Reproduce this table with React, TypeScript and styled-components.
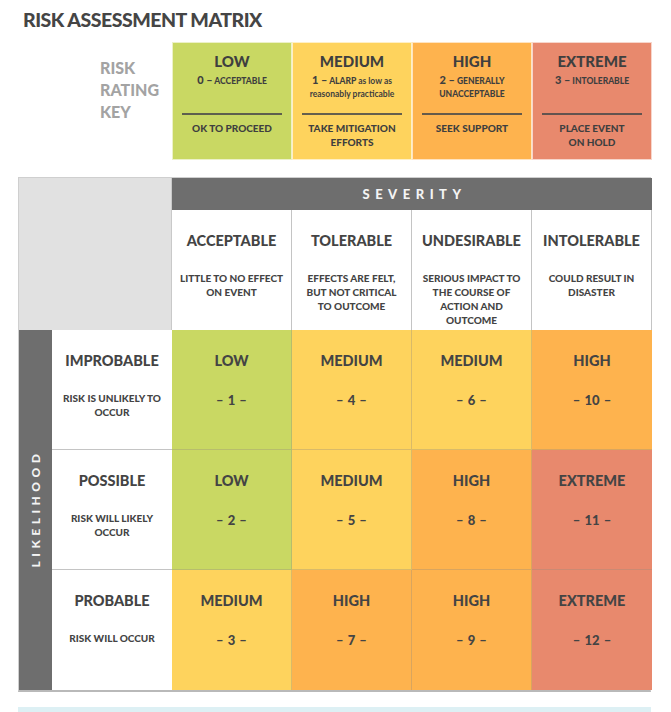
import React from "react";
import styled, { createGlobalStyle } from "styled-components";

const Global = createGlobalStyle`
  html, body { margin: 0; padding: 0; background: #ffffff; }
  body { font-family: "Lato", "Noto Sans", sans-serif; color: #3f3f3f; }
`;

const C = {
  low: "#c9d863",
  medium: "#fed35d",
  high: "#feb34e",
  extreme: "#e8896d",
};

type Level = keyof typeof C;

const Page = styled.div`
  width: 671px;
  height: 712px;
  overflow: hidden;
  padding: 9px 0 0 0;
  box-sizing: border-box;
`;

const Title = styled.h1`
  margin: 0 0 0 23px;
  font-size: 19.5px;
  line-height: 22px;
  font-weight: 900;
  color: #454545;
  letter-spacing: -0.5px;
`;

const KeyRow = styled.div`
  display: grid;
  grid-template-columns: 172px repeat(4, 120px);
  margin-top: 11px;
  height: 118px;
`;

const KeyLabel = styled.div`
  padding: 15px 0 0 100px;
  font-size: 16px;
  line-height: 22px;
  font-weight: 900;
  color: #a3a3a3;
`;

const KeyBox = styled.div<{ $level: Level }>`
  background: ${(p) => C[p.$level]};
  border: 1px solid rgba(255, 255, 255, 0.65);
  display: flex;
  flex-direction: column;
  align-items: center;
  text-align: center;
  padding: 0 9px;
  box-sizing: border-box;
`;

const KeyTop = styled.div`
  height: 70px;
  padding-top: 10px;
  box-sizing: border-box;
  width: 100%;
`;

const KeyHead = styled.div`
  font-size: 15px;
  line-height: 17px;
  font-weight: 900;
  color: #3f3f3f;
`;

const KeySub = styled.div`
  margin-top: 3px;
  font-size: 8.5px;
  line-height: 13px;
  font-weight: 900;
  color: #3f3f3f;
`;

const KeyNum = styled.span`
  font-size: 11px;
  line-height: 13px;
`;

const Lower = styled.span`
  text-transform: none;
  font-weight: 700;
`;

const Rule = styled.div`
  width: 100%;
  height: 2px;
  background: #4a4a4a;
  opacity: 0.85;
`;

const KeyAction = styled.div`
  margin-top: 6px;
  font-size: 10px;
  line-height: 14px;
  font-weight: 900;
  color: #3f3f3f;
`;

const Matrix = styled.div`
  margin: 17px 0 0 18px;
  width: 633px;
  display: grid;
  grid-template-columns: 33px 120px repeat(4, 120px);
  grid-template-rows: 32px repeat(4, 120px);
  border: 1px solid #cfcfcf;
  border-bottom: 2px solid #b9b9b9;
  box-sizing: border-box;
`;

const Corner = styled.div`
  grid-column: 1 / 3;
  grid-row: 1 / 3;
  background: #e1e1e1;
  border-right: 1px solid #c9c9c9;
`;

const SeverityBar = styled.div`
  grid-column: 3 / 7;
  grid-row: 1;
  background: #6e6e6e;
  color: #f4f4f4;
  display: flex;
  align-items: center;
  justify-content: center;
  font-size: 13px;
  font-weight: 900;
  letter-spacing: 5.5px;
  padding-left: 5px;
`;

const LikelihoodBar = styled.div`
  grid-column: 1;
  grid-row: 3 / 6;
  background: #6e6e6e;
  display: flex;
  align-items: center;
  justify-content: center;
`;

const Vertical = styled.span`
  transform: rotate(-90deg);
  white-space: nowrap;
  color: #f4f4f4;
  font-size: 12px;
  font-weight: 900;
  letter-spacing: 4.5px;
  padding-left: 4px;
`;

const HeadCell = styled.div`
  background: #ffffff;
  border-right: 1px solid #c4c4c4;
  text-align: center;
  padding: 22px 6px 0;
  &:last-child { border-right: none; }
`;

const RowCell = styled.div<{ $last?: boolean }>`
  background: #ffffff;
  border-bottom: ${(p) => (p.$last ? "none" : "1px solid #c4c4c4")};
  text-align: center;
  padding: 22px 6px 0;
`;

const CellTitle = styled.div`
  font-size: 14.5px;
  line-height: 18px;
  font-weight: 900;
  color: #444444;
`;

const CellDesc = styled.div`
  margin-top: 21px;
  font-size: 10px;
  line-height: 14px;
  font-weight: 900;
  color: #444444;
`;

const RiskCell = styled.div<{ $level: Level; $right?: boolean; $bottom?: boolean }>`
  background: ${(p) => C[p.$level]};
  border-right: ${(p) => (p.$right ? "none" : "1px solid rgba(150,140,125,0.35)")};
  border-bottom: ${(p) => (p.$bottom ? "none" : "1px solid rgba(150,140,125,0.35)")};
  text-align: center;
  padding-top: 22px;
`;

const RiskNum = styled.div`
  margin-top: 22px;
  font-size: 13px;
  line-height: 16px;
  font-weight: 900;
  color: #444444;
  word-spacing: 1px;
`;

const Footer = styled.div`
  margin: 15px 0 0 18px;
  width: 633px;
  height: 8px;
  background: #ddf0f4;
`;

const keys: { level: Level; head: string; sub: React.ReactNode; action: React.ReactNode }[] = [
  { level: "low", head: "LOW", sub: <><KeyNum>0 –</KeyNum> ACCEPTABLE</>, action: "OK TO PROCEED" },
  {
    level: "medium",
    head: "MEDIUM",
    sub: <><KeyNum>1 –</KeyNum> ALARP <Lower>as low as</Lower><br /><Lower>reasonably practicable</Lower></>,
    action: <>TAKE MITIGATION<br />EFFORTS</>,
  },
  { level: "high", head: "HIGH", sub: <><KeyNum>2 –</KeyNum> GENERALLY<br />UNACCEPTABLE</>, action: "SEEK SUPPORT" },
  { level: "extreme", head: "EXTREME", sub: <><KeyNum>3 –</KeyNum> INTOLERABLE</>, action: <>PLACE EVENT<br />ON HOLD</> },
];

const severities = [
  { title: "ACCEPTABLE", desc: <>LITTLE TO NO EFFECT<br />ON EVENT</> },
  { title: "TOLERABLE", desc: <>EFFECTS ARE FELT,<br />BUT NOT CRITICAL<br />TO OUTCOME</> },
  { title: "UNDESIRABLE", desc: <>SERIOUS IMPACT TO<br />THE COURSE OF<br />ACTION AND<br />OUTCOME</> },
  { title: "INTOLERABLE", desc: <>COULD RESULT IN<br />DISASTER</> },
];

const rows: { title: string; desc: React.ReactNode; cells: [Level, number][] }[] = [
  { title: "IMPROBABLE", desc: <>RISK IS UNLIKELY TO<br />OCCUR</>, cells: [["low", 1], ["medium", 4], ["medium", 6], ["high", 10]] },
  { title: "POSSIBLE", desc: <>RISK WILL LIKELY<br />OCCUR</>, cells: [["low", 2], ["medium", 5], ["high", 8], ["extreme", 11]] },
  { title: "PROBABLE", desc: <>RISK WILL OCCUR</>, cells: [["medium", 3], ["high", 7], ["high", 9], ["extreme", 12]] },
];

export default function App() {
  return (
    <Page>
      <Global />
      <Title>RISK ASSESSMENT MATRIX</Title>
      <KeyRow>
        <KeyLabel>RISK<br />RATING<br />KEY</KeyLabel>
        {keys.map((k) => (
          <KeyBox key={k.head} $level={k.level}>
            <KeyTop>
              <KeyHead>{k.head}</KeyHead>
              <KeySub>{k.sub}</KeySub>
            </KeyTop>
            <Rule />
            <KeyAction>{k.action}</KeyAction>
          </KeyBox>
        ))}
      </KeyRow>
      <Matrix>
        <Corner />
        <SeverityBar>SEVERITY</SeverityBar>
        {severities.map((s) => (
          <HeadCell key={s.title}>
            <CellTitle>{s.title}</CellTitle>
            <CellDesc>{s.desc}</CellDesc>
          </HeadCell>
        ))}
        <LikelihoodBar>
          <Vertical>LIKELIHOOD</Vertical>
        </LikelihoodBar>
        {rows.map((r, ri) => (
          <React.Fragment key={r.title}>
            <RowCell $last={ri === rows.length - 1}>
              <CellTitle>{r.title}</CellTitle>
              <CellDesc>{r.desc}</CellDesc>
            </RowCell>
            {r.cells.map(([lvl, n], ci) => (
              <RiskCell key={n} $level={lvl} $right={ci === 3} $bottom={ri === rows.length - 1}>
                <CellTitle>{lvl.toUpperCase()}</CellTitle>
                <RiskNum>– {n} –</RiskNum>
              </RiskCell>
            ))}
          </React.Fragment>
        ))}
      </Matrix>
      <Footer />
    </Page>
  );
}
